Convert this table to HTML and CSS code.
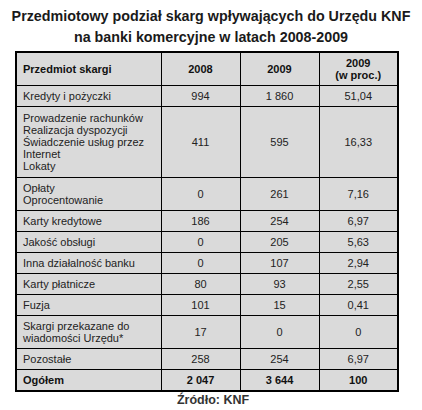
FILE: index.html
```html
<!DOCTYPE html>
<html lang="pl">
<head>
    <meta charset="UTF-8">
    <meta name="viewport" content="width=device-width, initial-scale=1.0">
    <title>Skargi KNF 2008-2009</title>
    <link rel="stylesheet" href="styles.css">
</head>
<body>
    <h1 class="title">Przedmiotowy podział skarg wpływających do Urzędu KNF<br>na banki komercyjne w latach 2008-2009</h1>
    <table class="complaints">
        <colgroup>
            <col class="col-name">
            <col class="col-num">
            <col class="col-num">
            <col class="col-num">
        </colgroup>
        <thead>
            <tr>
                <th class="name">Przedmiot skargi</th>
                <th>2008</th>
                <th>2009</th>
                <th>2009<br>(w proc.)</th>
            </tr>
        </thead>
        <tbody>
            <tr>
                <td class="name">Kredyty i pożyczki</td>
                <td>994</td>
                <td>1 860</td>
                <td>51,04</td>
            </tr>
            <tr class="tall">
                <td class="name">Prowadzenie rachunków<br>Realizacja dyspozycji<br>Świadczenie usług przez<br>Internet<br>Lokaty</td>
                <td>411</td>
                <td>595</td>
                <td>16,33</td>
            </tr>
            <tr>
                <td class="name">Opłaty<br>Oprocentowanie</td>
                <td>0</td>
                <td>261</td>
                <td>7,16</td>
            </tr>
            <tr>
                <td class="name">Karty kredytowe</td>
                <td>186</td>
                <td>254</td>
                <td>6,97</td>
            </tr>
            <tr>
                <td class="name">Jakość obsługi</td>
                <td>0</td>
                <td>205</td>
                <td>5,63</td>
            </tr>
            <tr>
                <td class="name">Inna działalność banku</td>
                <td>0</td>
                <td>107</td>
                <td>2,94</td>
            </tr>
            <tr>
                <td class="name">Karty płatnicze</td>
                <td>80</td>
                <td>93</td>
                <td>2,55</td>
            </tr>
            <tr>
                <td class="name">Fuzja</td>
                <td>101</td>
                <td>15</td>
                <td>0,41</td>
            </tr>
            <tr>
                <td class="name">Skargi przekazane do<br>wiadomości Urzędu*</td>
                <td>17</td>
                <td>0</td>
                <td>0</td>
            </tr>
            <tr>
                <td class="name">Pozostałe</td>
                <td>258</td>
                <td>254</td>
                <td>6,97</td>
            </tr>
            <tr class="total">
                <td class="name">Ogółem</td>
                <td>2 047</td>
                <td>3 644</td>
                <td>100</td>
            </tr>
        </tbody>
    </table>
    <p class="source">Źródło: KNF</p>
</body>
</html>
```

FILE: styles.css
```css
body {
    margin: 0;
    padding: 0;
    background-color: #fff;
    font-family: "Liberation Sans", Arial, sans-serif;
    color: #222;
}
.title {
    margin: 0;
    padding-top: 6px;
    font-size: 14.3px;
    line-height: 21px;
    text-align: center;
    color: #1a1a1a;
}
.complaints {
    margin: 3px 0 0 15px;
    width: 384px;
    border-collapse: collapse;
    border: 2px solid #000;
    table-layout: fixed;
    font-size: 11px;
    line-height: 12px;
}
.col-name {
    width: 145px;
}
.col-num {
    width: 79px;
}
.complaints th,
.complaints td {
    background-color: #dadada;
    border: 1px solid #000;
    padding: 4px 6px;
    text-align: center;
    vertical-align: middle;
}
.complaints th {
    color: #111;
}
.complaints .name {
    text-align: left;
}
.complaints tr.tall td {
    height: 62px;
}
.complaints tr.total td {
    font-weight: bold;
    color: #111;
}
.source {
    margin: 1px 0 0;
    padding-left: 4px;
    font-size: 12.5px;
    line-height: 14px;
    font-weight: bold;
    text-align: center;
    color: #333;
}
```
